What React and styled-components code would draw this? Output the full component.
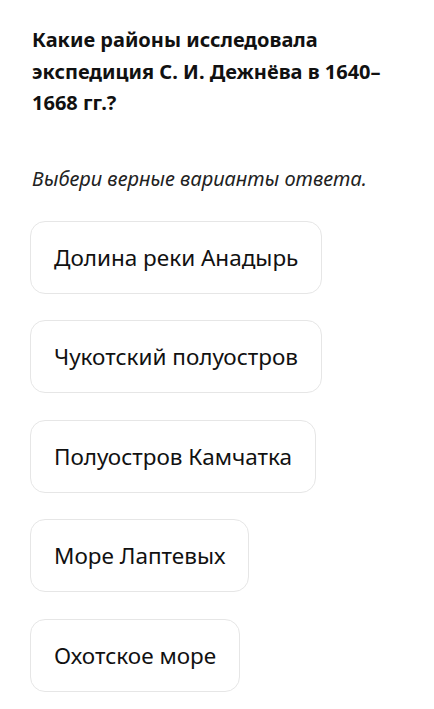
import React from "react";
import styled, { createGlobalStyle } from "styled-components";

const Global = createGlobalStyle`
  html, body { margin: 0; padding: 0; background: #fff; }
  body { font-family: "Noto Sans", "Open Sans", sans-serif; color: #111; }
`;

const Page = styled.div`
  padding: 24px 30px 0 30px;
  display: flex;
  flex-direction: column;
`;

const Title = styled.h1`
  margin: 0 0 0 2px;
  font-size: 20px;
  font-weight: 700;
  line-height: 31.5px;
  color: #111;
  max-width: 370px;
`;

const Hint = styled.p`
  margin: 47px 0 0 2px;
  font-size: 20px;
  font-style: italic;
  line-height: 26px;
  color: #222;
`;

const Options = styled.div`
  margin-top: 29px;
  display: flex;
  flex-direction: column;
  align-items: flex-start;
  gap: 26.5px;
`;

const Option = styled.button`
  height: 73px;
  box-sizing: border-box;
  padding: 0 23px;
  border: 1.5px solid #e6e6e6;
  border-radius: 15px;
  background: #fff;
  font-family: "Noto Sans", "Open Sans", sans-serif;
  font-size: 22.5px;
  color: #111;
  cursor: pointer;
  text-align: left;
`;

const answers = [
  "Долина реки Анадырь",
  "Чукотский полуостров",
  "Полуостров Камчатка",
  "Море Лаптевых",
  "Охотское море",
];

export default function App() {
  return (
    <>
      <Global />
      <Page>
        <Title>Какие районы исследовала экспедиция С. И. Дежнёва в 1640–1668 гг.?</Title>
        <Hint>Выбери верные варианты ответа.</Hint>
        <Options>
          {answers.map((a) => (
            <Option key={a}>{a}</Option>
          ))}
        </Options>
      </Page>
    </>
  );
}
